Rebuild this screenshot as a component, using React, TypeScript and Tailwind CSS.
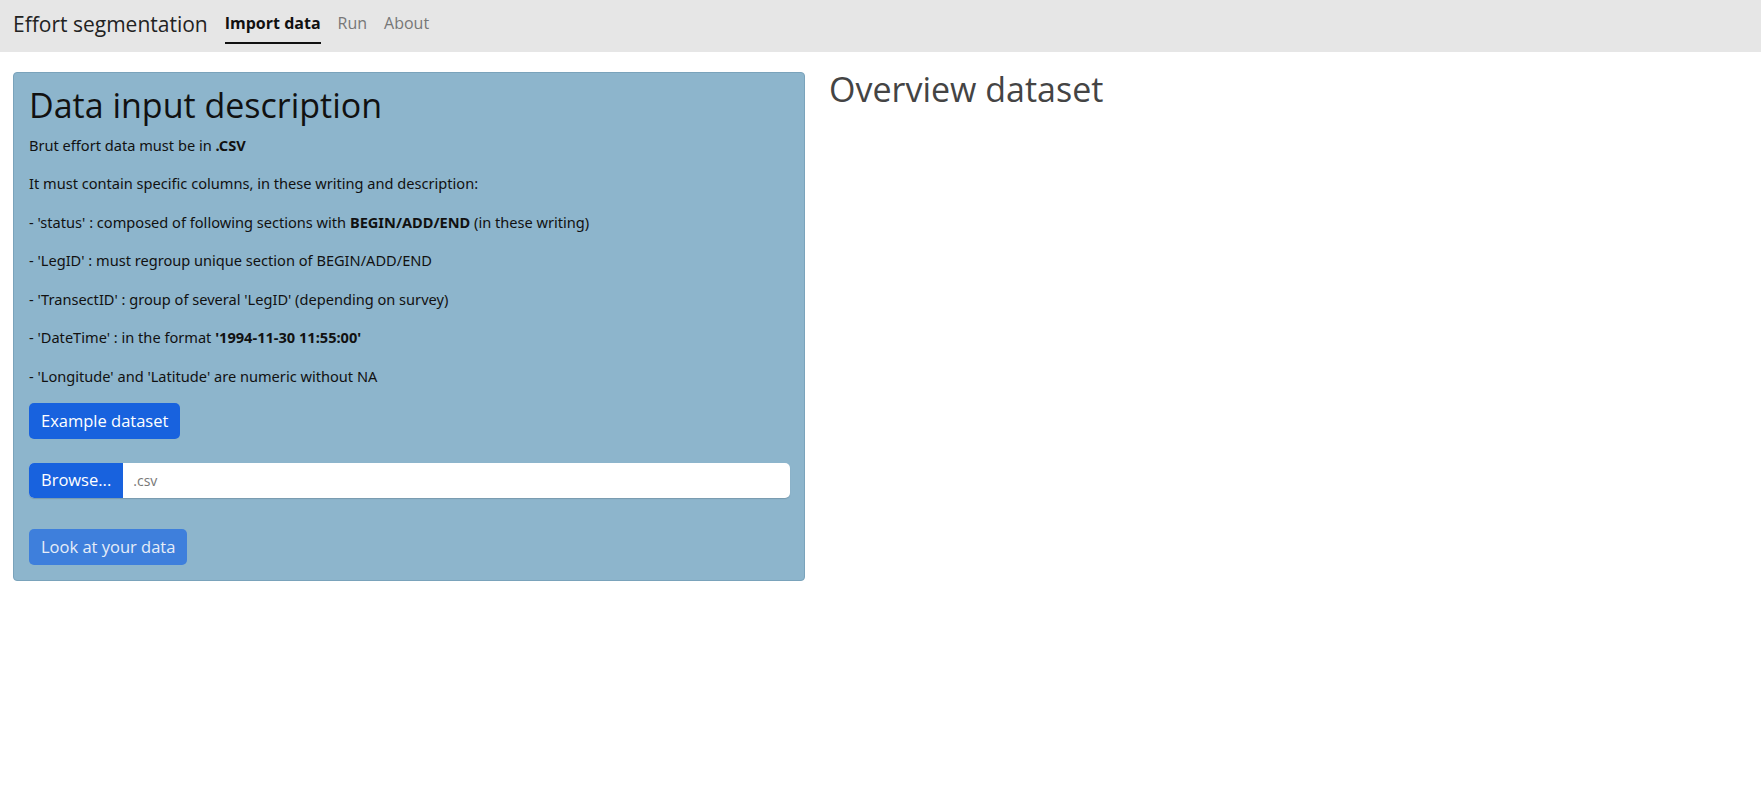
import React from "react";

export default function App() {
  const body = { fontFamily: '"Noto Sans", "Open Sans", sans-serif' };
  const head = { fontFamily: '"Open Sans", "Noto Sans", sans-serif' };
  return (
    <div className="min-h-[795px] w-full bg-white" style={body}>
      <nav className="flex h-[52px] items-center bg-[#e6e6e6] pl-[13px]">
        <span className="mr-[17px] mt-[-2px] text-[21px] text-[#222]" style={head}>Effort segmentation</span>
        <div className="flex h-full items-center gap-[17px] text-[16px]" style={head}>
          <div className="relative flex h-full items-center pb-[6px] font-bold text-[#111]">
            Import data
            <span className="absolute bottom-[8px] left-0 right-0 h-[2px] bg-[#111]" />
          </div>
          <div className="pb-[6px] text-[#777]">Run</div>
          <div className="pb-[6px] text-[#777]">About</div>
        </div>
      </nav>
      <div className="flex gap-[24px] px-[13px] pt-[20px]">
        <div className="w-[792px] shrink-0 rounded-[4px] border border-[#7aa3bb] bg-[#8db5cc] px-[15px] pb-[15px] pt-[12px] text-[14.6px] text-[#111]">
          <h2 className="mb-[8px] text-[34px] leading-[1.2] text-[#111]" style={head}>Data input description</h2>
          <p className="mb-[16px] leading-[22.5px]">Brut effort data must be in <b>.CSV</b></p>
          <p className="mb-[16px] leading-[22.5px]">It must contain specific columns, in these writing and description:</p>
          <p className="mb-[16px] leading-[22.5px]">- 'status' : composed of following sections with <b>BEGIN/ADD/END</b> (in these writing)</p>
          <p className="mb-[16px] leading-[22.5px]">- 'LegID' : must regroup unique section of BEGIN/ADD/END</p>
          <p className="mb-[16px] leading-[22.5px]">- 'TransectID' : group of several 'LegID' (depending on survey)</p>
          <p className="mb-[16px] leading-[22.5px]">- 'DateTime' : in the format <b>'1994-11-30 11:55:00'</b></p>
          <p className="mb-[16px] leading-[22.5px]">- 'Longitude' and 'Latitude' are numeric without NA</p>
          <button className="h-[36px] rounded-[5px] bg-[#1862de] px-[12px] text-[16.5px] text-white" style={head}>Example dataset</button>
          <div className="mt-[24px] flex h-[35px] w-[761px] overflow-hidden rounded-[5px] bg-white shadow-[0_1px_1px_rgba(0,0,0,0.15)]">
            <div className="flex items-center bg-[#1862de] px-[12px] text-[16.5px] text-white" style={head}>Browse...</div>
            <div className="flex items-center px-[10px] text-[14px] text-[#777]" style={head}>.csv</div>
          </div>
          <button className="mt-[31px] h-[36px] rounded-[5px] bg-[#3e7fdc] px-[12px] text-[16.5px] text-[#e6edf8]" style={head}>Look at your data</button>
        </div>
        <div className="mt-[-3px]">
          <h2 className="text-[34px] leading-[1.2] text-[#444]" style={head}>Overview dataset</h2>
        </div>
      </div>
    </div>
  );
}
